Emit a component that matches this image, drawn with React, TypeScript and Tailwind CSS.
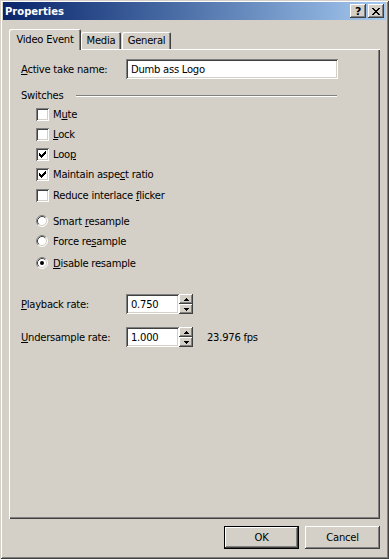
import React from 'react';

const raised =
  'shadow-[inset_-1px_-1px_0_#404040,inset_1px_1px_0_#ffffff,inset_-2px_-2px_0_#808080,inset_2px_2px_0_#d4d0c8]';
const sunken =
  'shadow-[inset_1px_1px_0_#808080,inset_-1px_-1px_0_#ffffff,inset_2px_2px_0_#404040,inset_-2px_-2px_0_#d4d0c8]';

function CheckBox({ checked }: { checked?: boolean }) {
  return (
    <span className={`w-[13px] h-[13px] bg-white shrink-0 flex items-center justify-center ${sunken}`}>
      {checked && (
        <svg width="7" height="7" viewBox="0 0 7 7" shapeRendering="crispEdges">
          <rect x="6" y="0" width="1" height="1" fill="#000" />
          <rect x="5" y="1" width="2" height="1" fill="#000" />
          <rect x="0" y="2" width="1" height="1" fill="#000" />
          <rect x="4" y="2" width="3" height="1" fill="#000" />
          <rect x="0" y="3" width="2" height="1" fill="#000" />
          <rect x="3" y="3" width="3" height="1" fill="#000" />
          <rect x="0" y="4" width="5" height="1" fill="#000" />
          <rect x="1" y="5" width="3" height="1" fill="#000" />
          <rect x="2" y="6" width="1" height="1" fill="#000" />
        </svg>
      )}
    </span>
  );
}

function Radio({ checked }: { checked?: boolean }) {
  return (
    <svg width="12" height="12" viewBox="0 0 12 12" className="shrink-0">
      <circle cx="6" cy="6" r="5" fill="#ffffff" />
      <path d="M9.89 2.11 A5.5 5.5 0 0 0 2.11 9.89" fill="none" stroke="#808080" strokeWidth="1" />
      <path d="M2.11 9.89 A5.5 5.5 0 0 0 9.89 2.11" fill="none" stroke="#ffffff" strokeWidth="1" />
      <path d="M9.18 2.82 A4.5 4.5 0 0 0 2.82 9.18" fill="none" stroke="#404040" strokeWidth="1" />
      <path d="M2.82 9.18 A4.5 4.5 0 0 0 9.18 2.82" fill="none" stroke="#d4d0c8" strokeWidth="1" />
      {checked && <circle cx="6" cy="6" r="2" fill="#000000" />}
    </svg>
  );
}

function Spinner() {
  return (
    <div className="flex flex-col w-[14px] h-[20px]">
      <div className={`h-[10px] bg-[#d4d0c8] flex items-center justify-center ${raised}`}>
        <svg width="5" height="3" viewBox="0 0 5 3" shapeRendering="crispEdges">
          <rect x="2" y="0" width="1" height="1" fill="#000" />
          <rect x="1" y="1" width="3" height="1" fill="#000" />
          <rect x="0" y="2" width="5" height="1" fill="#000" />
        </svg>
      </div>
      <div className={`h-[10px] bg-[#d4d0c8] flex items-center justify-center ${raised}`}>
        <svg width="5" height="3" viewBox="0 0 5 3" shapeRendering="crispEdges">
          <rect x="0" y="0" width="5" height="1" fill="#000" />
          <rect x="1" y="1" width="3" height="1" fill="#000" />
          <rect x="2" y="2" width="1" height="1" fill="#000" />
        </svg>
      </div>
    </div>
  );
}

function Row({ children, className = '' }: { children: React.ReactNode; className?: string }) {
  return <div className={`flex items-center gap-[4px] ${className}`}>{children}</div>;
}

export default function App() {
  return (
    <div className="w-[389px] h-[559px] bg-[#d4d0c8] flex flex-col text-black text-[10px] tracking-[-0.25px] font-['DejaVu_Sans','Verdana',sans-serif] shadow-[inset_1px_1px_0_#d4d0c8,inset_-1px_-1px_0_#404040,inset_2px_2px_0_#ffffff,inset_-2px_-2px_0_#808080]">
      {/* title bar */}
      <div className="mt-[2px] mx-[3px] h-[18px] bg-linear-to-r from-[#0a246a] to-[#a6caf0] flex items-center pl-[2px] pr-[2px]">
        <span className="text-white font-bold tracking-normal">Properties</span>
        <div className="ml-auto flex gap-[2px]">
          <div className={`w-[16px] h-[14px] bg-[#d4d0c8] flex items-center justify-center font-bold text-[11px] leading-none ${raised}`}>
            ?
          </div>
          <div className={`w-[16px] h-[14px] bg-[#d4d0c8] flex items-center justify-center ${raised}`}>
            <svg width="8" height="7" viewBox="0 0 8 7" shapeRendering="crispEdges">
              <rect x="0" y="0" width="2" height="1" fill="#000" />
              <rect x="6" y="0" width="2" height="1" fill="#000" />
              <rect x="1" y="1" width="2" height="1" fill="#000" />
              <rect x="5" y="1" width="2" height="1" fill="#000" />
              <rect x="2" y="2" width="4" height="1" fill="#000" />
              <rect x="3" y="3" width="2" height="1" fill="#000" />
              <rect x="2" y="4" width="4" height="1" fill="#000" />
              <rect x="1" y="5" width="2" height="1" fill="#000" />
              <rect x="5" y="5" width="2" height="1" fill="#000" />
              <rect x="0" y="6" width="2" height="1" fill="#000" />
              <rect x="6" y="6" width="2" height="1" fill="#000" />
            </svg>
          </div>
        </div>
      </div>

      {/* tabs */}
      <div className="mt-[9px] ml-[9px] h-[21px] -mb-[1px] flex items-end relative z-10">
        <div className="w-[72px] h-[21px] pb-[1px] bg-[#d4d0c8] rounded-t-[2px] flex items-center justify-center shadow-[inset_1px_1px_0_#ffffff,inset_-1px_0_0_#404040,inset_-2px_0_0_#808080]">
          Video Event
        </div>
        <div className="w-[40px] h-[17px] mb-[1px] bg-[#d4d0c8] rounded-t-[2px] flex items-center justify-center shadow-[inset_1px_1px_0_#ffffff,inset_-1px_0_0_#404040,inset_-2px_0_0_#808080]">
          Media
        </div>
        <div className="ml-[1px] w-[49px] h-[17px] mb-[1px] bg-[#d4d0c8] rounded-t-[2px] flex items-center justify-center shadow-[inset_1px_1px_0_#ffffff,inset_-1px_0_0_#404040,inset_-2px_0_0_#808080]">
          General
        </div>
      </div>

      {/* panel */}
      <div className="ml-[9px] w-[371px] h-[470px] bg-[#d4d0c8] pl-[12px] pt-[10px] flex flex-col shadow-[inset_1px_1px_0_#ffffff,inset_-1px_-1px_0_#404040,inset_-2px_-2px_0_#808080]">
        <div className="flex items-center h-[20px]">
          <span className="w-[105px]">
            <u>A</u>ctive take name:
          </span>
          <div className={`w-[212px] h-[20px] bg-white pl-[5px] flex items-center ${sunken}`}>Dumb ass Logo</div>
        </div>

        <div className="mt-[10px] h-[13px] flex items-center">
          <span className="w-[55px]">Switches</span>
          <div className="w-[261px] h-[2px] border-t border-t-[#808080] border-b border-b-white" />
        </div>

        <div className="mt-[2px] pl-[15px] flex flex-col">
          <Row className="h-[20px]">
            <CheckBox />
            <span>
              M<u>u</u>te
            </span>
          </Row>
          <Row className="h-[20px]">
            <CheckBox />
            <span>
              <u>L</u>ock
            </span>
          </Row>
          <Row className="h-[20px]">
            <CheckBox checked />
            <span>
              Loo<u>p</u>
            </span>
          </Row>
          <Row className="h-[20px]">
            <CheckBox checked />
            <span>
              Maintain aspe<u>c</u>t ratio
            </span>
          </Row>
          <Row className="h-[22px]">
            <CheckBox />
            <span>
              Reduce interlace <u>f</u>licker
            </span>
          </Row>
          <Row className="h-[20px] mt-[5px]">
            <Radio />
            <span className="ml-[1px]">
              Smart <u>r</u>esample
            </span>
          </Row>
          <Row className="h-[20px]">
            <Radio />
            <span className="ml-[1px]">
              Force re<u>s</u>ample
            </span>
          </Row>
          <Row className="h-[20px] mt-[2px]">
            <Radio checked />
            <span className="ml-[1px]">
              <u>D</u>isable resample
            </span>
          </Row>
        </div>

        <div className="mt-[21px] flex items-center h-[20px]">
          <span className="w-[105px]">
            <u>P</u>layback rate:
          </span>
          <div className={`w-[53px] h-[20px] bg-white pl-[5px] flex items-center ${sunken}`}>0.750</div>
          <Spinner />
        </div>
        <div className="mt-[13px] flex items-center h-[20px]">
          <span className="w-[105px]">
            <u>U</u>ndersample rate:
          </span>
          <div className={`w-[53px] h-[20px] bg-white pl-[5px] flex items-center ${sunken}`}>1.000</div>
          <Spinner />
          <span className="ml-[14px]">23.976 fps</span>
        </div>
      </div>

      {/* buttons */}
      <div className="mt-[7px] pr-[9px] flex justify-end gap-[6px]">
        <button className={`w-[75px] h-[23px] bg-[#d4d0c8] border border-black flex items-center justify-center ${raised}`}>
          OK
        </button>
        <button className={`w-[75px] h-[23px] bg-[#d4d0c8] flex items-center justify-center ${raised}`}>
          Cancel
        </button>
      </div>
    </div>
  );
}
